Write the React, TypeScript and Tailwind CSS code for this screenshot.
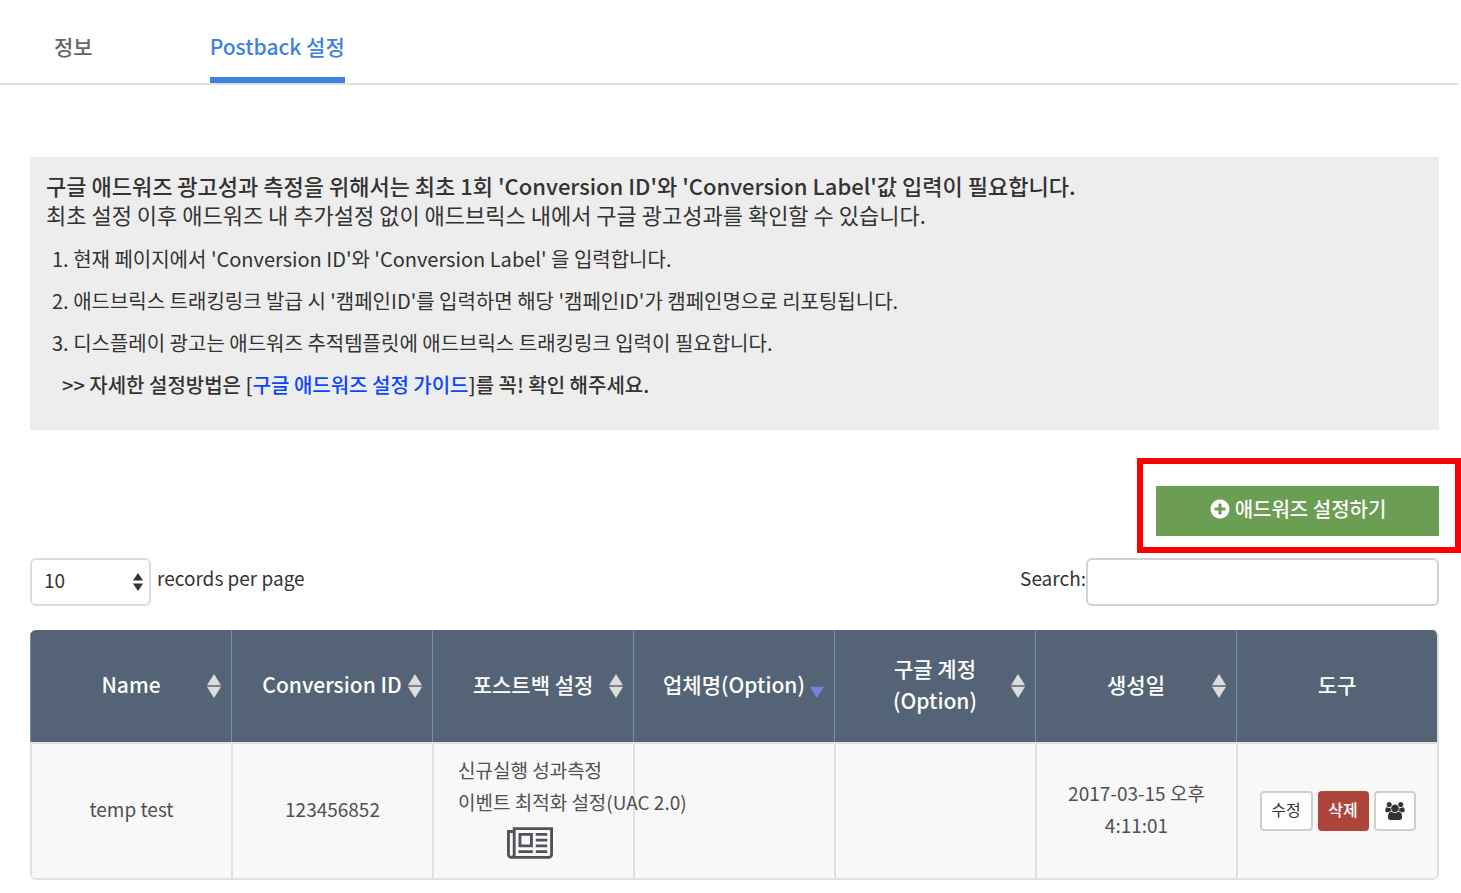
import React, { useState } from "react";

type SortState = "none" | "desc" | "off";

interface Column {
    label: string;
    sort: SortState;
}

interface Posting {
    name: string;
    conversionId: string;
    company: string;
    account: string;
    createdAt: string;
}

const columns: Column[] = [
    { label: "Name", sort: "none" },
    { label: "Conversion ID", sort: "none" },
    { label: "포스트백 설정", sort: "none" },
    { label: "업체명(Option)", sort: "desc" },
    { label: "구글 계정 (Option)", sort: "none" },
    { label: "생성일", sort: "none" },
    { label: "도구", sort: "off" },
];

const rows: Posting[] = [
    { name: "temp test", conversionId: "123456852", company: "", account: "", createdAt: "2017-03-15 오후 4:11:01" },
];

const steps = [
    "현재 페이지에서 'Conversion ID'와 'Conversion Label' 을 입력합니다.",
    "애드브릭스 트래킹링크 발급 시 '캠페인ID'를 입력하면 해당 '캠페인ID'가 캠페인명으로 리포팅됩니다.",
    "디스플레이 광고는 애드워즈 추적템플릿에 애드브릭스 트래킹링크 입력이 필요합니다.",
];

const PlusCircleIcon = () => (
    <svg viewBox="0 0 1792 1792" className="size-[22px]" fill="currentColor" aria-hidden="true">
        <path d="M1344 960v-128q0-26-19-45t-45-19h-256v-256q0-26-19-45t-45-19h-128q-26 0-45 19t-19 45v256h-256q-26 0-45 19t-19 45v128q0 26 19 45t45 19h256v256q0 26 19 45t45 19h128q26 0 45-19t19-45v-256h256q26 0 45-19t19-45zm320-64q0 209-103 385.5t-279.5 279.5-385.5 103-385.5-103-279.5-279.5-103-385.5 103-385.5 279.5-279.5 385.5-103 385.5 103 279.5 279.5 103 385.5z" />
    </svg>
);

const NewspaperIcon = () => (
    <svg viewBox="0 128 2048 1408" className="h-8 w-[46px]" fill="currentColor" aria-hidden="true">
        <path d="M1024 512h-384v384h384v-384zm128 640v128h-640v-128h640zm0-768v640h-640v-640h640zm640 768v128h-512v-128h512zm0-256v128h-512v-128h512zm0-256v128h-512v-128h512zm0-256v128h-512v-128h512zm-1536 960v-960h-128v960q0 26 19 45t45 19 45-19 19-45zm1664 0v-1088h-1536v1088q0 33-11 64h1483q26 0 45-19t19-45zm128-1216v1216q0 80-56 136t-136 56h-1664q-80 0-136-56t-56-136v-1088h256v-128h1792z" />
    </svg>
);

const GroupIcon = () => (
    <svg viewBox="0 0 1920 1792" className="h-[18px] w-5" fill="currentColor" aria-hidden="true">
        <path d="M593 896q-162 5-265 128h-134q-82 0-138-40.5t-56-118.5q0-353 124-353 6 0 43.5 21t97.5 42.5 119 21.5q67 0 133-23-5 37-5 66 0 139 81 256zm1071 637q0 120-73 189.5t-194 69.5h-874q-121 0-194-69.5t-73-189.5q0-53 3.5-103.5t14-109 26.5-108.5 43-97.5 62-81 85.5-53.5 111.5-20q10 0 43 21.5t73 48 107 48 135 21.5 135-21.5 107-48 73-48 43-21.5q61 0 111.5 20t85.5 53.5 62 81 43 97.5 26.5 108.5 14 109 3.5 103.5zm-1024-1277q0 106-75 181t-181 75-181-75-75-181 75-181 181-75 181 75 75 181zm704 384q0 159-112.5 271.5t-271.5 112.5-271.5-112.5-112.5-271.5 112.5-271.5 271.5-112.5 271.5 112.5 112.5 271.5zm576 225q0 78-56 118.5t-138 40.5h-134q-103-123-265-128 81-117 81-256 0-29-5-66 66 23 133 23 59 0 119-21.5t97.5-42.5 43.5-21q124 0 124 353zm-128-609q0 106-75 181t-181 75-181-75-75-181 75-181 181-75 181 75 75 181z" />
    </svg>
);

const SortIcon: React.FC<{ sort: SortState }> = ({ sort }) => (
    <svg viewBox="0 0 14 24" className="absolute top-1/2 right-2.5 h-6 w-3.5 -translate-y-1/2" aria-hidden="true">
        {sort === "none" && <path d="M7 0l7 11.3H0z" fill="#dcdcdc" />}
        <path d="M7 24L0 12.7h14z" fill={sort === "desc" ? "#7486dc" : "#dcdcdc"} />
    </svg>
);

const Notice = () => (
    <section className="bg-[#ededed] px-4 pt-3.5 pb-6 text-[#333]">
        <p className="text-[22px] leading-[29px] font-medium">
            구글 애드워즈 광고성과 측정을 위해서는 최초 1회 'Conversion ID'와 'Conversion Label'값 입력이 필요합니다.
        </p>
        <p className="text-[22px] leading-[29px]">
            최초 설정 이후 애드워즈 내 추가설정 없이 애드브릭스 내에서 구글 광고성과를 확인할 수 있습니다.
        </p>
        <ol className="mt-[9px] list-inside list-decimal pl-1.5 text-xl leading-[42px]">
            {steps.map((step) => (
                <li key={step}>{step}</li>
            ))}
        </ol>
        <p className="pl-4 text-xl leading-[42px] font-medium">
            &gt;&gt; 자세한 설정방법은 [
            <a href="#guide" className="text-[#0a46ff]">구글 애드워즈 설정 가이드</a>
            ]를 꼭! 확인 해주세요.
        </p>
    </section>
);

const App: React.FC = () => {
    const [pageSize, setPageSize] = useState("10");
    const [query, setQuery] = useState("");

    const visible = rows.filter((row) => row.name.includes(query)).slice(0, Number(pageSize));

    return (
        <div className="bg-white font-['Noto_Sans_CJK_KR',sans-serif] text-[#333]">
            <nav className="mr-[3px] flex gap-[117px] border-b-2 border-[#e0e0e0] pl-[54px] text-[21px] font-medium">
                <a href="#info" className="border-b-6 border-transparent pt-[31px] pb-4 leading-[30px] text-[#666]">정보</a>
                <a href="#postback" aria-current="page" className="border-b-6 border-[#3d82dc] pt-[31px] pb-4 leading-[30px] text-[#3d82dc]">
                    Postback 설정
                </a>
            </nav>

            <main className="pt-18 pr-[22px] pl-[30px]">
                <Notice />

                {/* highlighted action */}
                <div className="mt-7 -mr-[22px] ml-auto w-[324px] border-6 border-[#ff0000] pt-[22px] pr-4 pb-[11px] pl-[13px]">
                    <button type="button" className="flex h-[50px] w-full items-center justify-center gap-1 bg-[#6b9d53] pb-1 text-xl font-medium text-white">
                        <PlusCircleIcon />
                        애드워즈 설정하기
                    </button>
                </div>

                <div className="mt-[5px] flex items-center justify-between text-[19px]">
                    <div className="flex items-center gap-1.5">
                        <div className="relative">
                            <select
                                id="page-size"
                                value={pageSize}
                                onChange={(e) => setPageSize(e.target.value)}
                                className="h-12 w-[121px] appearance-none rounded-md border-2 border-[#ddd] bg-white px-3 pb-1"
                            >
                                <option value="10">10</option>
                                <option value="25">25</option>
                                <option value="50">50</option>
                            </select>
                            <svg viewBox="0 0 10 18" className="pointer-events-none absolute top-[15px] right-2 h-[18px] w-2.5" fill="#333" aria-hidden="true">
                                <path d="M5 0l5 7.5H0zM5 18l-5-7.5h10z" />
                            </svg>
                        </div>
                        <label htmlFor="page-size" className="pb-2">records per page</label>
                    </div>
                    <div className="flex items-center">
                        <label htmlFor="search" className="pb-2">Search:</label>
                        <input
                            id="search"
                            type="text"
                            value={query}
                            onChange={(e) => setQuery(e.target.value)}
                            className="h-12 w-[353px] rounded-md border-2 border-[#d2d2d2] bg-white px-3"
                        />
                    </div>
                </div>

                <div className="mt-6 overflow-hidden rounded-md border-r-2 border-b-2 border-[#e0e0e0]">
                    <table className="w-full table-fixed border-separate border-spacing-0">
                        <thead className="bg-[#546476] text-[21px] text-white">
                            <tr>
                                {columns.map((col) => (
                                    <th key={col.label} scope="col" className="relative h-28 border-l border-[#7594a2] px-7 pb-1 leading-8 font-medium">
                                        {col.label}
                                        {col.sort !== "off" && <SortIcon sort={col.sort} />}
                                    </th>
                                ))}
                            </tr>
                        </thead>
                        <tbody className="bg-[#f8f8f8] text-center text-[19px] leading-8 text-[#505050]">
                            {visible.map((row) => (
                                <tr key={row.conversionId} className="[&>td]:border-t-2 [&>td]:border-l-2 [&>td]:border-[#e0e0e0]">
                                    <td className="px-6 pb-1">{row.name}</td>
                                    <td className="px-6 pb-1">{row.conversionId}</td>
                                    <td className="px-6 pt-2.5 pb-[19px]">
                                        <div className="text-left whitespace-nowrap">
                                            신규실행 성과측정
                                            <br />
                                            이벤트 최적화 설정(UAC 2.0)
                                        </div>
                                        <div className="mt-[9px] flex justify-center pr-2 text-[#505357]">
                                            <NewspaperIcon />
                                        </div>
                                    </td>
                                    <td className="px-6 pb-1">{row.company}</td>
                                    <td className="px-6 pb-1">{row.account}</td>
                                    <td className="px-6 pb-1">{row.createdAt}</td>
                                    <td>
                                        <div className="flex justify-center gap-[5px] text-base text-[#333]">
                                            <button type="button" className="h-10 w-[53px] rounded border-2 border-[#d0d0d0] bg-white pb-1">수정</button>
                                            <button type="button" className="h-10 w-[51px] rounded bg-[#ae453b] pb-1 font-medium text-white">삭제</button>
                                            <button type="button" aria-label="그룹" className="flex h-10 w-[42px] items-center justify-center rounded border-2 border-[#d0d0d0] bg-white">
                                                <GroupIcon />
                                            </button>
                                        </div>
                                    </td>
                                </tr>
                            ))}
                        </tbody>
                    </table>
                </div>
            </main>
        </div>
    );
};

export default App;
